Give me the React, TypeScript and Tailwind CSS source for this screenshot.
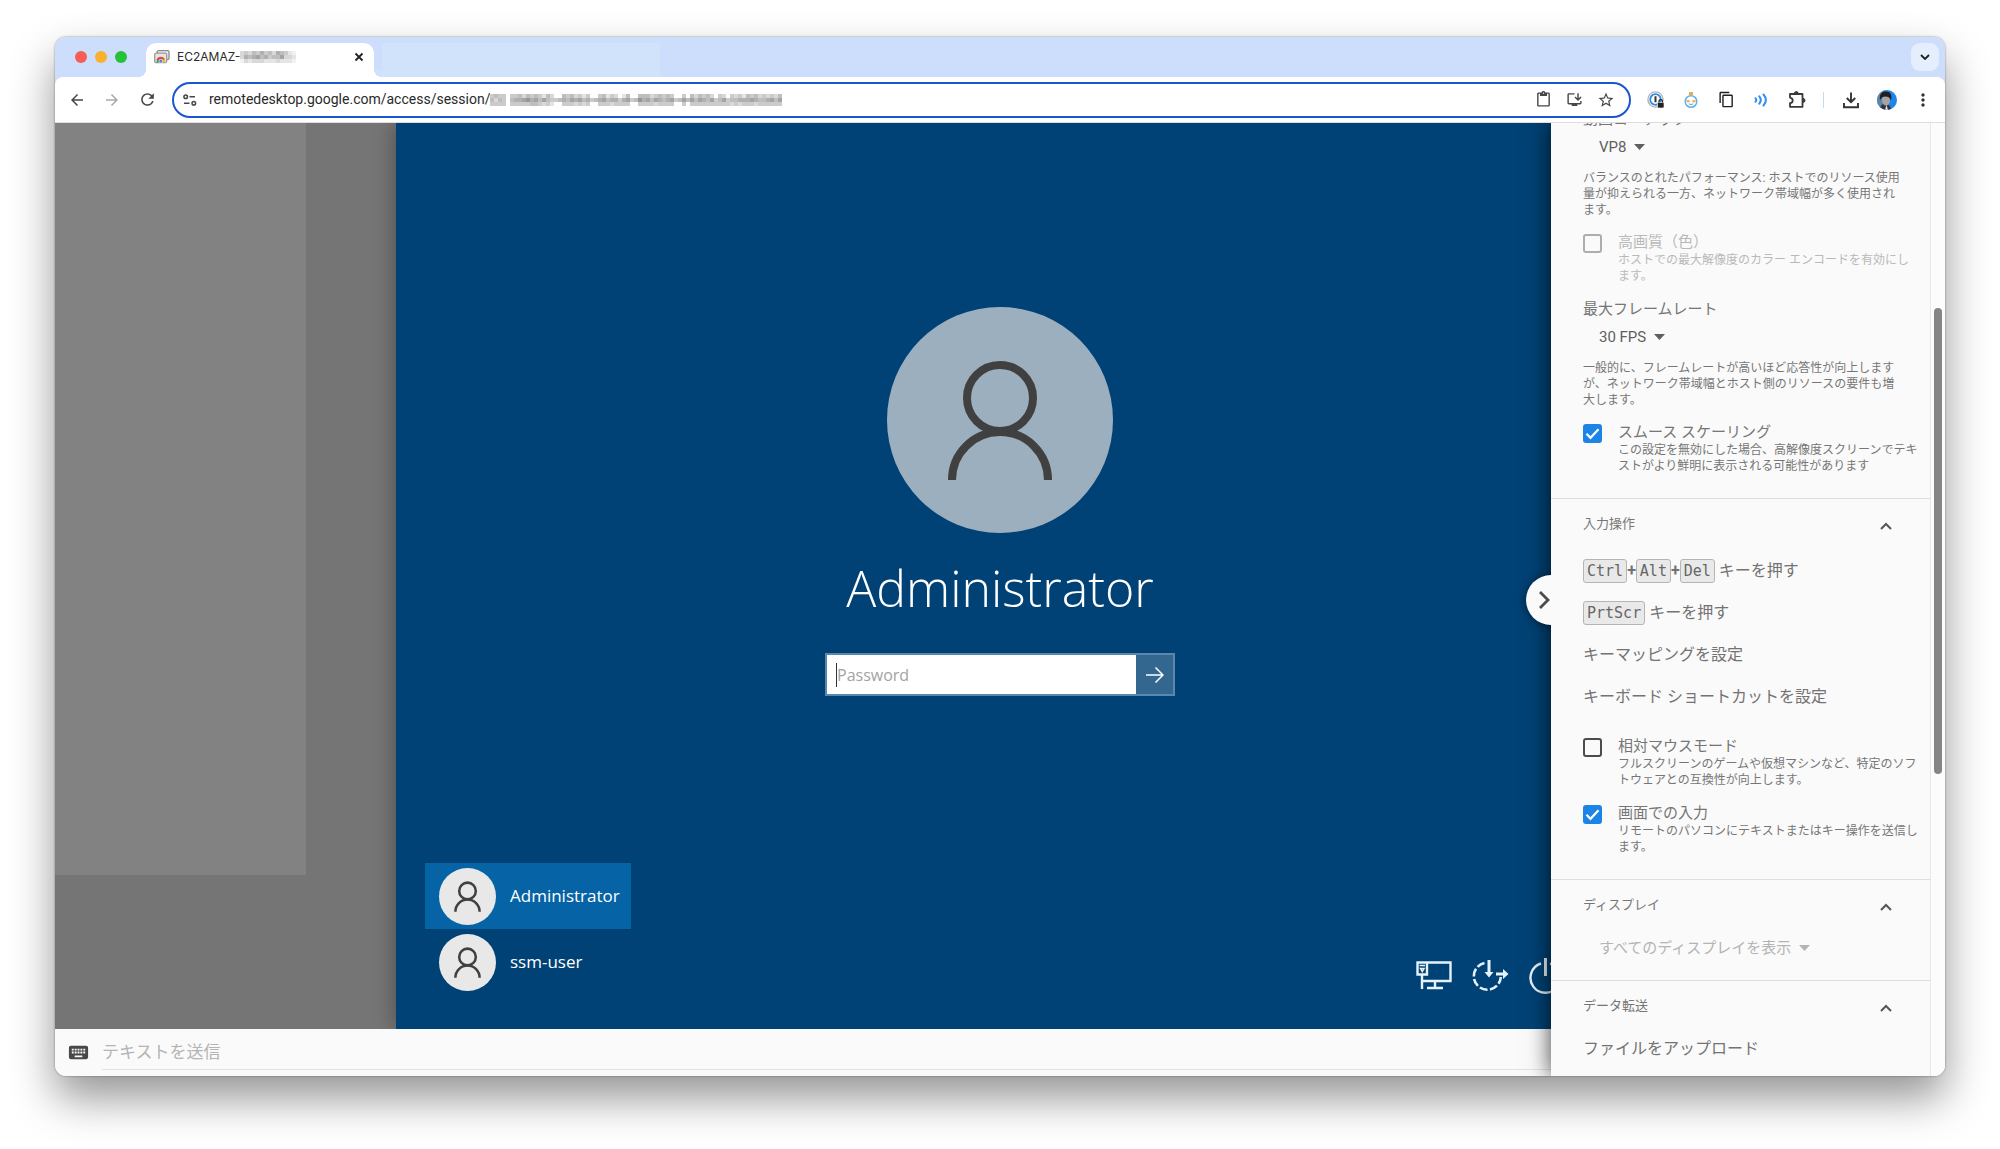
import React from "react";
import {
  MdArrowBack,
  MdArrowForward,
  MdContentCopy,
  MdContentPaste,
  MdKeyboard,
  MdMoreVert,
  MdOutlineExtension,
  MdOutlineInstallDesktop,
  MdRefresh,
  MdStarBorder,
} from "react-icons/md";

const jp = "font-['Roboto','Noto_Sans_CJK_JP',sans-serif]";

/* Pixelated strip that hides private text. Each digit is a grey level. */
function Mosaic({ rows, cell, label }: { rows: string[]; cell: number; label: string }) {
  const w = rows[0].length * cell;
  const h = rows.length * cell;
  return (
    <svg width={w} height={h} viewBox={`0 0 ${w} ${h}`} role="img" aria-label={label} shapeRendering="crispEdges" className="shrink-0">
      {rows.flatMap((row, y) =>
        row.split("").map((c, x) => (
          <rect key={`${x}-${y}`} x={x * cell} y={y * cell} width={cell} height={cell} fill="#555" opacity={Number(c) / 13} />
        )),
      )}
    </svg>
  );
}

function Person({ size, stroke, color }: { size: number; stroke: number; color: string }) {
  return (
    <svg width={size} height={size} viewBox="0 0 226 226" fill="none" stroke={color} strokeWidth={stroke}>
      <circle cx="113" cy="91" r="33" />
      <path d="M65 173a48 48 0 0 1 96 0" />
    </svg>
  );
}

function TabStrip() {
  return (
    <div className="flex h-10 items-end bg-[#cddefc] pr-[6px]">
      <div className="flex h-10 w-[91px] items-center gap-2 pl-5">
        <button aria-label="Close window" className="size-3 rounded-full bg-[#f75d53]" />
        <button aria-label="Minimize window" className="size-3 rounded-full bg-[#f9b12d]" />
        <button aria-label="Zoom window" className="size-3 rounded-full bg-[#25c138]" />
      </div>
      <div className="relative flex h-[34px] w-[228px] items-center rounded-t-[10px] bg-white pr-[10px] pb-[6px] pl-2">
        <span className="absolute bottom-0 -left-2 size-2 bg-[radial-gradient(circle_at_0_0,#cddefc_8px,white_8px)]" />
        <span className="absolute -right-2 bottom-0 size-2 bg-[radial-gradient(circle_at_100%_0,#d1e1fb_8px,white_8px)]" />
        <svg width="16" height="14" viewBox="0 0 16 14" className="shrink-0">
          <rect x="3" y="0.7" width="12" height="9" rx="1.5" fill="#eee" stroke="#8a8a8a" strokeWidth="1.3" />
          <rect x="0.7" y="3.2" width="12" height="9.5" rx="1.5" fill="#e4e4e4" stroke="#9a9a9a" strokeWidth="1.3" />
          <path d="M2.6 12.6a4.3 4.3 0 0 1 1.5-4.4L6.7 12.6z" fill="#34a853" />
          <path d="M2.6 10a4.3 4.3 0 0 1 8.3 0z" fill="#ea4335" />
          <path d="M7 9.5h3.7a4.3 4.3 0 0 1 .2 3.1H6.5z" fill="#fbbc05" />
          <circle cx="6.8" cy="11.2" r="1.9" fill="#4285f4" stroke="#fff" strokeWidth=".6" />
        </svg>
        <span className="ml-[7px] font-['Inter'] text-[12px] text-[#2b2b2b]">EC2AMAZ-</span>
        <Mosaic cell={4} label="hidden host name" rows={["34354645365421", "36567564557332", "13233322232221"]} />
        <button aria-label="Close tab" className="ml-auto">
          <svg width="10" height="10" viewBox="0 0 10 10" fill="none" stroke="#222" strokeWidth="1.8">
            <path d="M1.500 1.500l7 7M8.500 1.500l-7 7" />
          </svg>
        </button>
      </div>
      <div className="ml-2 h-[34px] w-[278px] bg-[#d1e2fb]" />
      <button
        aria-label="Search tabs"
        className="mb-[6px] ml-auto flex size-7 items-center justify-center rounded-[9px] bg-[#e4eefd]"
      >
        <svg width="10" height="6" viewBox="0 0 10 6" fill="none" stroke="#1f1f1f" strokeWidth="1.8">
          <path d="M1 1l4 4 4-4" />
        </svg>
      </button>
    </div>
  );
}

function Toolbar() {
  return (
    <div className="bg-[#cddefc]">
      <div className="flex h-[46px] items-center rounded-t-[8px] border-b border-[#dedede] bg-white pr-3 pl-[13px] text-[#474747]">
        <button aria-label="Back" className="w-[18px]"><MdArrowBack size={18} /></button>
        <button aria-label="Forward" className="ml-[17px] w-[18px] text-[#a9a9a9]"><MdArrowForward size={18} /></button>
        <button aria-label="Reload" className="ml-[17px] w-[18px]"><MdRefresh size={19} /></button>
        <div className="ml-4 flex h-9 flex-1 items-center rounded-full border-2 border-[#1a56d0] pr-[14px] pl-[9px]">
          <button aria-label="Site information" className="shrink-0">
            <svg width="14" height="12" viewBox="0 0 14 12" fill="none" stroke="#474747" strokeWidth="1.500">
              <circle cx="2.700" cy="2.700" r="1.800" />
              <path d="M6.500 2.700H12M1 9.300h5.500" />
              <circle cx="10.800" cy="9.300" r="1.800" />
            </svg>
          </button>
          <input
            aria-label="Address"
            defaultValue="remotedesktop.google.com/access/session/"
            className="ml-3 bg-transparent font-['Roboto'] text-[14px] text-[#2a2a2a] outline-none [field-sizing:content]"
          />
          <Mosaic
            cell={4}
            label="hidden session id"
            rows={[
              "4544044535454253005453424004524302500555345454004053545304304342545343435",
              "5354056678675754456576756456756646745867576567457575765745745566676556757",
              "4444044444554342004443434004443444400444434444004044444444443434443444444",
            ]}
          />
          <div className="ml-auto flex items-center gap-[14px]">
            <button aria-label="Clipboard"><MdContentPaste size={17} /></button>
            <button aria-label="Install app"><MdOutlineInstallDesktop size={17} /></button>
            <button aria-label="Bookmark"><MdStarBorder size={18} /></button>
          </div>
        </div>
        <div className="ml-4 flex items-center">
          <button aria-label="Password manager">
            <svg width="18" height="18" viewBox="0 0 18 18" fill="none">
              <circle cx="8.500" cy="8.500" r="7.600" stroke="#b4b4b4" strokeWidth="1.400" />
              <circle cx="8.500" cy="8.500" r="5.300" fill="#fff" stroke="#2f8de4" strokeWidth="1.800" />
              <path d="M8.500 5.300v6" stroke="#333" strokeWidth="2" />
              <rect x="10.500" y="11.500" width="6.500" height="5.500" rx="1" fill="#222" stroke="#fff" strokeWidth=".6" />
              <path d="M12 11.500v-1.200a1.700 1.700 0 0 1 3.400 0v1.200" stroke="#222" strokeWidth="1.200" />
            </svg>
          </button>
          <button aria-label="Timer" className="ml-[17px]">
            <svg width="18" height="18" viewBox="0 0 18 18" fill="none">
              <rect x="7" y="1" width="4" height="3" fill="#f5a93a" />
              <circle cx="9" cy="10.500" r="5.800" stroke="#5fb3ea" strokeWidth="1.500" />
              <path d="M4.500 10.200h3.200M10.300 10.200h3.200" stroke="#f5a93a" strokeWidth="2" />
              <path d="M6.800 12.600c1 1.200 3.400 1.200 4.400 0" stroke="#5fb3ea" strokeWidth="1.200" />
            </svg>
          </button>
          <button aria-label="Copy" className="ml-[18px] text-[#1f1f1f]"><MdContentCopy size={17} /></button>
          <button aria-label="Cast audio" className="ml-[18px]">
            <svg width="16" height="16" viewBox="0 0 16 16" fill="none" stroke="#2f8df5" strokeWidth="2" strokeLinecap="round">
              <path d="M2.500 6.200q1.500 1.800 0 3.600M6.300 4.300q3 3.700 0 7.400M10.500 2.500q4.800 5.500 0 11" />
            </svg>
          </button>
          <button aria-label="Extensions" className="ml-[19px]">
            <svg width="19" height="18" viewBox="0 0 19 18" fill="none" stroke="#3a3a3a" strokeWidth="1.800" strokeLinejoin="round">
              <path d="M2 3h12.500v12.800H2v-3.600c3.600-.6 3.600-5 0-5.600z" />
              <path d="M6.300 2.600a2 2 0 0 1 4 0zM15 7.400a2 2 0 0 1 0 4z" fill="#3a3a3a" strokeWidth="1" />
            </svg>
          </button>
          <span className="ml-4 h-4 w-px bg-[#c2d9f8]" />
          <button aria-label="Downloads" className="ml-[18px]">
            <svg width="18" height="18" viewBox="0 0 18 18" fill="none" stroke="#333" strokeWidth="1.900">
              <path d="M9 1.500v9.500M4.800 7l4.200 4.200L13.200 7M2 12v4.300h14V12" />
            </svg>
          </button>
          <button aria-label="Profile" className="ml-[17px]">
            <svg width="20" height="20" viewBox="0 0 20 20">
              <defs>
                <clipPath id="profile"><circle cx="10" cy="10" r="10" /></clipPath>
              </defs>
              <g clipPath="url(#profile)">
                <rect width="20" height="20" fill="#1e86ea" />
                <path d="M0 0h9v20H0z" fill="#5c86a8" />
                <path d="M3 20c0-5 2-6 5-6s6 2 6 6z" fill="#33363c" />
                <ellipse cx="9" cy="10" rx="4" ry="5.500" fill="#aaa2a0" />
                <path d="M3 10C2 3 6 1 9 1.500c4 0 6.500 3 5 9C12.500 6 8.500 6 5.500 7z" fill="#1c1f24" />
                <path d="M8 20l1.500-5 1.500 5z" fill="#e9e9ec" />
              </g>
            </svg>
          </button>
          <button aria-label="Menu" className="ml-4 text-[#333]"><MdMoreVert size={20} /></button>
        </div>
      </div>
    </div>
  );
}

function RemoteScreen() {
  return (
    <div className="relative flex w-[1208px] shrink-0 flex-col items-center bg-[#004275] font-['Open_Sans'] text-white shadow-[0_0_20px_rgba(0,0,0,0.35)]">
      <div className="mt-[184px] rounded-full bg-[#9cafbe]">
        <Person size={226} stroke={8} color="#3f403f" />
      </div>
      <h1 className="mt-5 text-[50px] leading-[70px] font-light">Administrator</h1>
      <form className="mt-[30px] flex h-[43px] w-[350px] border-2 border-[#5a87ab]" onSubmit={(e) => e.preventDefault()}>
        <label className="flex flex-1 items-center bg-white pl-[9px]">
          <span className="h-6 w-px bg-[#333]" />
          <input
            type="password"
            aria-label="Password"
            placeholder="Password"
            className="w-full text-[16px] text-[#333] outline-none placeholder:text-[#a3a3a3]"
          />
        </label>
        <button aria-label="Submit" className="flex w-[37px] items-center justify-center bg-[#33678f]">
          <svg width="18" height="18" viewBox="0 0 18 18" fill="none" stroke="#fff" strokeWidth="1.500">
            <path d="M0 9h17M9.500 1.500L17 9l-7.500 7.500" />
          </svg>
        </button>
      </form>

      <div className="mt-auto mb-[34px] flex w-full items-end pl-[29px]">
        <div className="flex w-[206px] flex-col text-[17px]">
          <button className="flex h-[66px] items-center bg-[#0563a6] pl-[14px]">
            <span className="rounded-full bg-[#e8e8e8]"><Person size={57} stroke={10} color="#3f403f" /></span>
            <span className="ml-[14px]">Administrator</span>
          </button>
          <button className="flex h-[66px] items-center pl-[14px]">
            <span className="rounded-full bg-[#e8e8e8]"><Person size={57} stroke={10} color="#3f403f" /></span>
            <span className="ml-[14px]">ssm-user</span>
          </button>
        </div>
        <div className="mr-[39px] ml-auto flex items-center gap-5">
          <button aria-label="Network">
            <svg width="36" height="30" viewBox="0 0 36 30" fill="none" stroke="#e6f2fb" strokeWidth="2.400">
              <path d="M11 1.500h23.500v18.500H6M1.500 1.500h9.500v12H1.500zM6 13.500v14.500M19 20v6.500M11 27h16" />
              <path d="M3.500 4.500h5.500M4.500 7.500h3.500l-1.700 3z" strokeWidth="1.500" />
            </svg>
          </button>
          <button aria-label="Ease of access">
            <svg width="37" height="34" viewBox="0 0 37 34" fill="none" stroke="#e6f2fb" strokeWidth="2.600">
              <path d="M12.500 4A13.500 13.500 0 1 0 28.800 18" strokeDasharray="8 2.500" />
              <path d="M17 1v13M24 15h8" strokeWidth="3" />
              <path d="M12.500 13h9L17 18.500zM31 10l5.500 5-5.500 5z" fill="#e6f2fb" stroke="none" />
            </svg>
          </button>
          <button aria-label="Power">
            <svg width="36" height="38" viewBox="0 0 36 38" fill="none" stroke="#e6f2fb" strokeWidth="2.400">
              <path d="M12 6.500a15 15 0 1 0 9 0" />
              <path d="M16.500 1v18" strokeWidth="3" />
            </svg>
          </button>
        </div>
      </div>
    </div>
  );
}

function CheckRow(props: { id: string; label: string; lines: string[]; checked?: boolean; disabled?: boolean; className: string }) {
  const { id, label, lines, checked, disabled, className } = props;
  return (
    <div className={`flex gap-4 ${disabled ? "text-[#b9b9b9]" : "text-[#767676]"} ${className}`}>
      <span className="relative mt-[2px] size-[19px] shrink-0">
        <input
          id={id}
          type="checkbox"
          defaultChecked={checked}
          disabled={disabled}
          className="peer block size-[19px] appearance-none rounded-[3px] border-2 border-[#4c4c4c] checked:border-[#1c84e6] checked:bg-[#1c84e6] disabled:border-[#adadad]"
        />
        <svg
          viewBox="0 0 19 19"
          fill="none"
          stroke="#fff"
          strokeWidth="2.200"
          className="pointer-events-none absolute inset-0 hidden peer-checked:block"
        >
          <path d="M3.500 9.800l4 4 8-8.500" />
        </svg>
      </span>
      <label htmlFor={id} className="block whitespace-nowrap">
        <span className="block text-[15px] leading-5">{label}</span>
        {lines.map((l) => (
          <span key={l} className="block text-[12px] leading-4">{l}</span>
        ))}
      </label>
    </div>
  );
}

function Dropdown({ label, value, disabled, className }: { label: string; value: string; disabled?: boolean; className: string }) {
  return (
    <div className={`flex h-6 items-center pl-4 ${disabled ? "text-[#b4b4b4]" : "text-[#5f5f5f]"} ${className}`}>
      <select aria-label={label} disabled={disabled} className="-mr-5 appearance-none bg-transparent pr-7 text-[15px] leading-6 opacity-100 [field-sizing:content]">
        <option>{value}</option>
      </select>
      <svg width="11" height="6" viewBox="0 0 11 6" fill="currentColor" className="pointer-events-none shrink-0">
        <path d="M0 0h11L5.500 6z" />
      </svg>
    </div>
  );
}

function SectionTitle({ children }: { children: string }) {
  return (
    <button className="mt-[13px] flex h-6 w-full items-center pr-[5px] text-[13px] text-[#767676]">
      {children}
      <svg width="12" height="8" viewBox="0 0 12 8" fill="none" stroke="#555" strokeWidth="2" className="mt-1 ml-auto">
        <path d="M1 7l5-5 5 5" />
      </svg>
    </button>
  );
}

function Key({ children }: { children: string }) {
  return (
    <kbd className="rounded-[3px] border border-[#b5b5b5] bg-[#e9e9e9] px-[3px] font-['DejaVu_Sans_Mono'] text-[15px] leading-[22px] text-[#666]">
      {children}
    </kbd>
  );
}

const action = "flex h-[42px] items-center whitespace-nowrap text-[16px] text-[#737373]";

function SidePanel() {
  return (
    <aside className={`absolute inset-y-0 right-0 flex w-[394px] bg-[#fafafa] shadow-[0_0_22px_rgba(0,0,0,0.75)] ${jp}`}>
      <button
        aria-label="Collapse panel"
        className="absolute top-1/2 -left-[25px] flex size-[50px] -translate-y-1/2 items-center rounded-full bg-[#fafafa] pl-[11px] shadow-[0_1px_10px_rgba(0,0,0,0.5)]"
      >
        <svg width="14" height="20" viewBox="0 0 14 20" fill="none" stroke="#4c4c4c" strokeWidth="2.800">
          <path d="M3 2l8 8-8 8" />
        </svg>
      </button>
      <div className="relative flex flex-1 flex-col overflow-hidden bg-[#fafafa] text-[#767676]">
        <section className="-mt-4 border-b border-[#dedede] pb-6 pl-8">
          <h2 className="text-[15px] leading-6">動画コーデック</h2>
          <Dropdown label="動画コーデック" value="VP8" className="mt-1" />
          <p className="mt-[11px] text-[12px] leading-4 whitespace-nowrap">
            バランスのとれたパフォーマンス: ホストでのリソース使用
            <br />
            量が抑えられる一方、ネットワーク帯域幅が多く使用され
            <br />
            ます。
          </p>
          <CheckRow
            id="quality"
            disabled
            className="mt-[14px]"
            label="高画質（色）"
            lines={["ホストでの最大解像度のカラー エンコードを有効にし", "ます。"]}
          />
          <h2 className="mt-[13px] text-[15px] leading-6">最大フレームレート</h2>
          <Dropdown label="最大フレームレート" value="30 FPS" className="mt-1" />
          <p className="mt-[11px] text-[12px] leading-4 whitespace-nowrap">
            一般的に、フレームレートが高いほど応答性が向上します
            <br />
            が、ネットワーク帯域幅とホスト側のリソースの要件も増
            <br />
            大します。
          </p>
          <CheckRow
            id="smooth"
            checked
            className="mt-[14px]"
            label="スムース スケーリング"
            lines={["この設定を無効にした場合、高解像度スクリーンでテキ", "ストがより鮮明に表示される可能性があります"]}
          />
        </section>
        <section className="border-b border-[#dedede] pr-[33px] pb-6 pl-8">
          <SectionTitle>入力操作</SectionTitle>
          <div className="mt-[14px]">
            <button className={action}>
              <Key>Ctrl</Key>
              <b>+</b>
              <Key>Alt</Key>
              <b>+</b>
              <Key>Del</Key>
              <span className="ml-1">キーを押す</span>
            </button>
            <button className={action}>
              <Key>PrtScr</Key>
              <span className="ml-1">キーを押す</span>
            </button>
            <button className={action}>キーマッピングを設定</button>
            <button className={action}>キーボード ショートカットを設定</button>
          </div>
          <CheckRow
            id="mouse"
            className="mt-[18px]"
            label="相対マウスモード"
            lines={["フルスクリーンのゲームや仮想マシンなど、特定のソフ", "トウェアとの互換性が向上します。"]}
          />
          <CheckRow
            id="typing"
            checked
            className="mt-[15px]"
            label="画面での入力"
            lines={["リモートのパソコンにテキストまたはキー操作を送信し", "ます。"]}
          />
        </section>
        <section className="border-b border-[#dedede] pr-[33px] pb-5 pl-8">
          <SectionTitle>ディスプレイ</SectionTitle>
          <Dropdown label="ディスプレイ" value="すべてのディスプレイを表示" disabled className="mt-[19px]" />
        </section>
        <section className="pr-[33px] pl-8">
          <SectionTitle>データ転送</SectionTitle>
          <button className={`${action} mt-[10px]`}>ファイルをアップロード</button>
        </section>
      </div>
      <div className="relative w-[15px] border-l border-[#e8e8e8] bg-[#fcfcfc] pt-[185px] pl-[3px]">
        <div className="h-[466px] w-2 rounded-full bg-[#858585]" />
      </div>
    </aside>
  );
}

export default function App() {
  return (
    <div className="flex h-screen min-h-[800px] bg-white px-[55px] pt-[37px] pb-[73px] font-['Roboto']">
      <main className="flex min-w-0 flex-1 flex-col overflow-hidden rounded-[11px] shadow-[0_0_2px_rgba(0,0,0,0.5),0_22px_44px_rgba(0,0,0,0.42)]">
        <TabStrip />
        <Toolbar />
        <div className="relative flex min-h-0 flex-1 flex-col overflow-hidden">
          <div className="flex min-h-0 flex-1 justify-center overflow-hidden bg-[#757575]">
            <div className="min-w-0 flex-1">
              <div className="h-[83%] w-[251px] bg-[#828282]" />
            </div>
            <RemoteScreen />
            <div className="min-w-0 flex-1" />
          </div>
          <div className="flex h-[47px] items-center bg-[#fafafa] pl-3">
            <MdKeyboard size={23} className="text-[#484848]" />
            <input
              aria-label="テキストを送信"
              placeholder="テキストを送信"
              className={`mt-[3px] ml-3 h-8 flex-1 border-b border-[#e2e2e2] pb-1 text-[17px] outline-none placeholder:text-[#b4b4b4] ${jp}`}
            />
          </div>
          <SidePanel />
        </div>
      </main>
    </div>
  );
}
